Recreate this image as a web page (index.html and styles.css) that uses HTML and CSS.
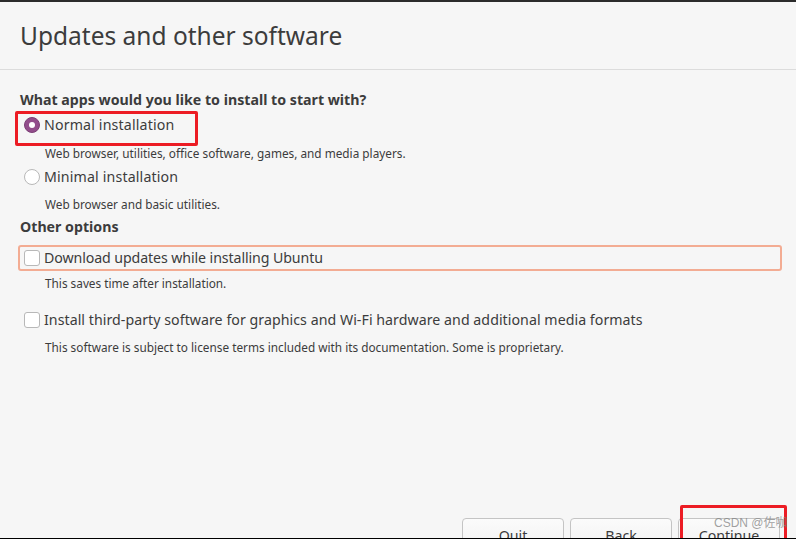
FILE: index.html
```html
<!DOCTYPE html>
<html>
<head>
<meta charset="utf-8">
<link rel="stylesheet" href="styles.css">
</head>
<body>
<div class="window">
  <div class="topbar"></div>
  <div class="header"><h1 class="title">Updates and other software</h1></div>
  <div class="content">
    <div class="section-title">What apps would you like to install to start with?</div>
    <div class="option row-normal"><span class="radio checked"></span><span class="label loose">Normal installation</span></div>
    <div class="desc desc-normal">Web browser, utilities, office software, games, and media players.</div>
    <div class="option row-minimal"><span class="radio"></span><span class="label loose">Minimal installation</span></div>
    <div class="desc desc-minimal">Web browser and basic utilities.</div>
    <div class="section-title other">Other options</div>
    <div class="option focus"><span class="check"></span><span class="label tight">Download updates while installing Ubuntu</span></div>
    <div class="desc desc-updates">This saves time after installation.</div>
    <div class="option row-third"><span class="check"></span><span class="label wide">Install third-party software for graphics and Wi-Fi hardware and additional media formats</span></div>
    <div class="desc desc-third">This software is subject to license terms included with its documentation. Some is proprietary.</div>
  </div>
  <div class="footer">
    <button class="btn">Quit</button>
    <button class="btn">Back</button>
    <button class="btn">Continue</button>
  </div>
  <div class="mark mark-normal"></div>
  <div class="mark mark-continue"></div>
  <div class="watermark">CSDN @佐咖</div>
</div>
<div class="bottombar"></div>
</body>
</html>
```
FILE: styles.css
```css
html, body {
  margin: 0;
  padding: 0;
  background: #f6f6f6;
  overflow: hidden;
}
body {
  width: 796px;
  height: 539px;
  font-family: "Noto Sans", "Noto Sans CJK SC", sans-serif;
  color: #3c3c3c;
}
.window {
  position: relative;
  height: 538px;
  display: flex;
  flex-direction: column;
  overflow: hidden;
}
.topbar {
  height: 2px;
  background: #2b2b2b;
  flex: none;
}
.header {
  height: 68px;
  border-bottom: 1px solid #dcdcdc;
  flex: none;
  box-sizing: border-box;
  padding-left: 20px;
  display: flex;
  align-items: center;
}
.title {
  margin: 0;
  font-size: 24.5px;
  font-weight: 400;
  line-height: 30px;
  color: #3c3c3c;
}
.content {
  padding: 0 20px;
  display: flex;
  flex-direction: column;
  align-items: flex-start;
}
.section-title {
  font-size: 14.2px;
  font-weight: 700;
  line-height: 18px;
  margin-top: 21px;
}
.section-title.other {
  margin-top: 6px;
}
.option {
  display: flex;
  align-items: center;
  height: 20px;
  padding-left: 4px;
  font-size: 14.2px;
}
.label {
  margin-left: 4px;
  line-height: 20px;
}
.label.loose { letter-spacing: 0.15px; }
.label.tight { letter-spacing: -0.1px; }
.label.wide { letter-spacing: 0.04px; }
.row-normal { margin-top: 6px; }
.row-minimal { margin-top: 6px; }
.row-third { margin-top: 19px; }
.desc {
  font-size: 11.8px;
  line-height: 16px;
  margin-left: 25px;
}
.desc-normal { margin-top: 10px; }
.desc-minimal { margin-top: 9px; }
.desc-updates { margin-top: 4px; }
.desc-third { margin-top: 9px; }
.focus {
  margin-top: 9px;
  margin-left: -2px;
  width: 764px;
  height: 26px;
  box-sizing: border-box;
  border: 2px solid #f3ac93;
  border-radius: 3px;
}
.radio {
  width: 16px;
  height: 16px;
  box-sizing: border-box;
  border-radius: 50%;
  border: 1px solid #b8b8b8;
  background: #ffffff;
  flex: none;
  display: flex;
  align-items: center;
  justify-content: center;
}
.radio.checked {
  background: #924d8b;
  border-color: #7c3f76;
}
.radio.checked::after {
  content: "";
  width: 6px;
  height: 6px;
  border-radius: 50%;
  background: #ffffff;
}
.check {
  width: 16px;
  height: 16px;
  box-sizing: border-box;
  border-radius: 3px;
  border: 1px solid #b8b8b8;
  background: #ffffff;
  flex: none;
}
.footer {
  margin-top: auto;
  height: 20px;
  flex: none;
  display: flex;
  justify-content: flex-end;
  gap: 6px;
  padding-right: 16px;
}
.btn {
  width: 102px;
  height: 34px;
  flex: none;
  border: 1px solid #c4c4c4;
  border-radius: 4px;
  background: linear-gradient(#fbfbfb, #f1f1f1);
  font-family: "Noto Sans", sans-serif;
  font-size: 14.2px;
  color: #3c3c3c;
  padding: 0;
}
.mark {
  position: absolute;
  border: 3px solid #ec1c24;
  border-radius: 2px;
  box-sizing: border-box;
}
.mark-normal {
  left: 15px;
  top: 111px;
  width: 183px;
  height: 35px;
}
.mark-continue {
  left: 680px;
  top: 505px;
  width: 107px;
  height: 40px;
}
.watermark {
  position: absolute;
  left: 714px;
  top: 515px;
  font-family: "Liberation Sans", "Noto Sans CJK SC", sans-serif;
  font-size: 12px;
  line-height: 16px;
  color: rgba(130, 130, 130, 0.75);
}
.bottombar {
  height: 1px;
  background: #000000;
}
```
